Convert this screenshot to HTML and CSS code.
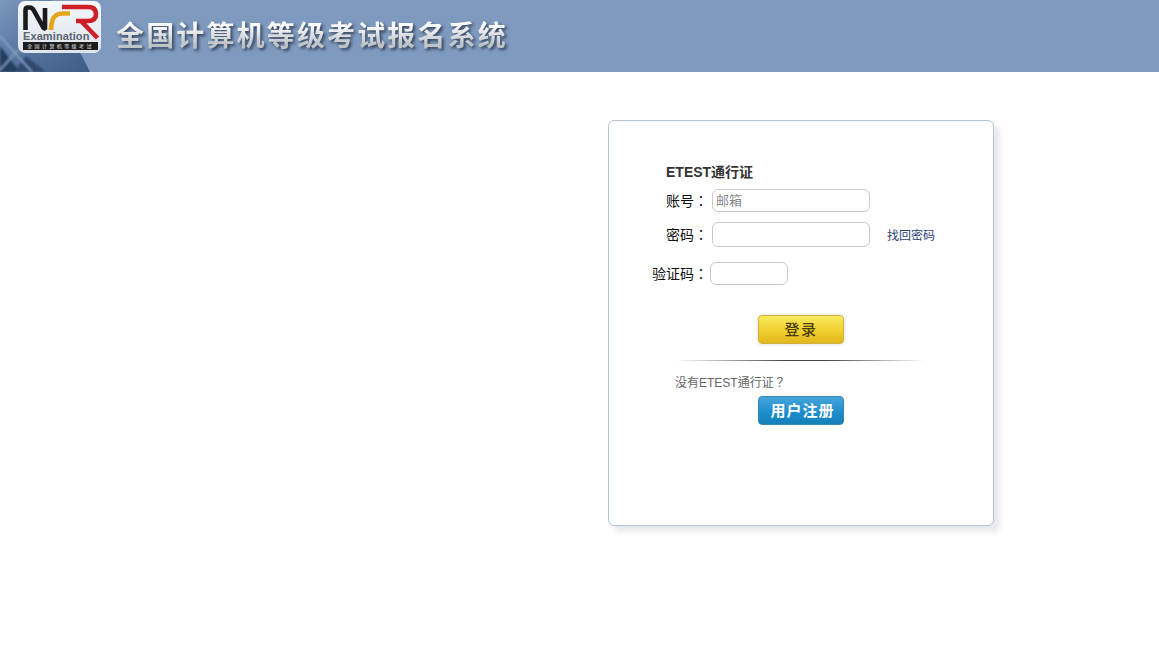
FILE: index.html
```html
<!DOCTYPE html>
<html lang="zh-CN">
<head>
<meta charset="utf-8">
<title>全国计算机等级考试报名系统</title>
<link rel="stylesheet" href="styles.css">
</head>
<body>
<header class="header">
  <svg class="corner" viewBox="0 0 100 72" width="100" height="72" aria-hidden="true">
    <defs>
      <linearGradient id="wedge" x1="0" y1="0" x2="1" y2="1">
        <stop offset="0" stop-color="#7b98bd"/>
        <stop offset="0.5" stop-color="#56749e"/>
        <stop offset="1" stop-color="#3f5c85"/>
      </linearGradient>
      <filter id="soft"><feGaussianBlur stdDeviation="1.1"/></filter>
    </defs>
    <polygon points="0,0 52,0 74,40 90,72 0,72" fill="url(#wedge)"/>
    <g filter="url(#soft)">
      <polygon points="0,46 20,72 0,72" fill="#23405f"/>
      <polygon points="14,72 26,56 46,72" fill="#2d4a6f"/>
      <path d="M0 36 L14 52 L32 72 M0 70 L18 50" fill="none" stroke="#8aa4c4" stroke-width="1.6"/>
    </g>
  </svg>
  <div class="logo">
    <svg class="logo-mark" viewBox="0 0 83 52" width="83" height="52" aria-hidden="true">
      <path d="M7.5 29 V9 Q7.5 6.5 10 6.5 H12 Q14 6.5 15.5 9 L25 26 Q26 28 27 27 V7" fill="none" stroke="#1b1b1b" stroke-width="4.6"/>
      <path d="M52 12.5 H45 Q37 12.5 34.5 19 Q33 24 33 29" fill="none" stroke="#e3a51a" stroke-width="4.6"/>
      <path d="M44 6 H70 Q78 6 78 13 Q78 20 70 20 H58 M63 20 L79.5 37" fill="none" stroke="#cf1f26" stroke-width="4.6"/>
    </svg>
    <span class="logo-word">Examination</span>
    <span class="logo-strip">全国计算机等级考试</span>
  </div>
  <h1 class="title">全国计算机等级考试报名系统</h1>
</header>
<main class="main">
  <form class="card">
    <div class="card-title">ETEST通行证</div>
    <div class="row row-account">
      <label class="label" for="account" lang="zh-TW">账号：</label>
      <input class="input input-account" id="account" type="text" placeholder="邮箱">
    </div>
    <div class="row row-password">
      <label class="label" for="password" lang="zh-TW">密码：</label>
      <input class="input input-password" id="password" type="password">
      <a class="forgot" href="#">找回密码</a>
    </div>
    <div class="row row-captcha">
      <label class="label" for="captcha" lang="zh-TW">验证码：</label>
      <input class="input input-captcha" id="captcha" type="text">
    </div>
    <button class="btn btn-login" type="button">登录</button>
    <div class="divider"></div>
    <p class="note" lang="zh-TW">没有ETEST通行证？</p>
    <button class="btn btn-register" type="button">用户注册</button>
  </form>
</main>
</body>
</html>
```
FILE: styles.css
```css
* { box-sizing: border-box; }
html, body { margin: 0; padding: 0; }
body {
  background: #fff;
  font-family: "Liberation Sans", "Noto Sans CJK SC", sans-serif;
  color: #222;
}
.header {
  position: relative;
  height: 72px;
  background: #7e9abf;
  display: flex;
  align-items: center;
  padding-left: 18px;
  overflow: hidden;
}
.corner { position: absolute; left: 0; top: 0; }
.logo {
  position: relative;
  width: 83px;
  height: 52px;
  margin-top: -18px;
  flex: none;
  background: linear-gradient(#f4f7fa, #dde5ec);
  border-radius: 7px;
}
.logo-mark { display: block; }
.logo-word {
  position: absolute;
  left: 5px;
  top: 29px;
  font: bold 11px/12px "Liberation Sans", sans-serif;
  letter-spacing: 0.1px;
  color: #5a6570;
}
.logo-strip {
  position: absolute;
  left: 5px;
  top: 41px;
  width: 75px;
  height: 8px;
  background: #1c1c1c;
  color: #e4e4e4;
  font: 5px/8px "Noto Sans CJK SC", sans-serif;
  text-align: center;
  letter-spacing: 2.4px;
  white-space: nowrap;
  overflow: hidden;
}
.title {
  position: relative;
  margin: -4px 0 0 15px;
  font: bold 28px/34px "Noto Sans CJK SC", sans-serif;
  letter-spacing: 2.15px;
  white-space: nowrap;
  background: linear-gradient(#fbfbfb 25%, #bfc3c8 80%);
  -webkit-background-clip: text;
  background-clip: text;
  color: transparent;
  filter: drop-shadow(2px 2px 1.5px rgba(30, 40, 60, 0.75));
}
.main { padding: 48px 0 0 608px; min-height: 575px; }
.card {
  width: 386px;
  height: 406px;
  background: #fff;
  border: 1px solid #b4c3d6;
  border-radius: 6px;
  box-shadow: 6px 6px 5px rgba(150, 155, 165, 0.22);
  padding: 41px 0 0 43px;
  display: flex;
  flex-direction: column;
  align-items: flex-start;
}
.card-title {
  margin-left: 14px;
  font-size: 14px;
  line-height: 20px;
  font-weight: bold;
  color: #333;
}
.row { display: flex; align-items: center; }
.row-account { margin-top: 7px; }
.row-password { margin-top: 10px; }
.row-captcha { margin-top: 15px; }
.label {
  width: 56px;
  flex: none;
  padding-bottom: 2px;
  text-align: right;
  font-family: "Noto Sans CJK TC", sans-serif;
  font-size: 14px;
  line-height: 20px;
  color: #111;
}
.input {
  margin: 0 0 0 4px;
  padding: 0 3px;
  border: 1px solid #c9c9cf;
  border-radius: 6px;
  background: #fff;
  outline: none;
  font: 13px "Liberation Sans", "Noto Sans CJK SC", sans-serif;
}
.input::placeholder { color: #888; opacity: 1; }
.input-account { width: 158px; height: 23px; }
.input-password { width: 158px; height: 25px; }
.input-captcha { width: 78px; height: 23px; margin-left: 2px; }
.forgot {
  margin-left: 17px;
  font-size: 12px;
  color: #2c4478;
  text-decoration: none;
}
.btn {
  display: block;
  width: 86px;
  height: 29px;
  margin: 0 0 0 106px;
  padding: 0 0 2px;
  border-radius: 4px;
  font-family: "Noto Sans CJK SC", sans-serif;
  cursor: pointer;
}
.btn-login {
  margin-top: 30px;
  border: 1px solid #cfb23d;
  background: linear-gradient(#f8ea5c, #f0cf2d 55%, #e2b71f);
  box-shadow: 0 0 0 2px #f3f3f3;
  color: #4a3f08;
  font-size: 15px;
  font-weight: 500;
  letter-spacing: 1.5px;
}
.divider {
  width: 250px;
  height: 1px;
  margin: 16px 0 0 23px;
  background: linear-gradient(90deg, rgba(60,60,60,0), #444 45%, #444 60%, rgba(60,60,60,0));
}
.note {
  margin: 12px 0 0 23px;
  font-family: "Liberation Sans", "Noto Sans CJK TC", sans-serif;
  font-size: 12px;
  line-height: 20px;
  color: #666;
}
.btn-register {
  margin-top: 3px;
  border: 1px solid #3d86ad;
  background: linear-gradient(#46a4dc, #1c8dcb 60%, #1580b8);
  color: #fff;
  font-size: 15px;
  font-weight: bold;
  letter-spacing: 1px;
  padding-left: 3px;
}
```
